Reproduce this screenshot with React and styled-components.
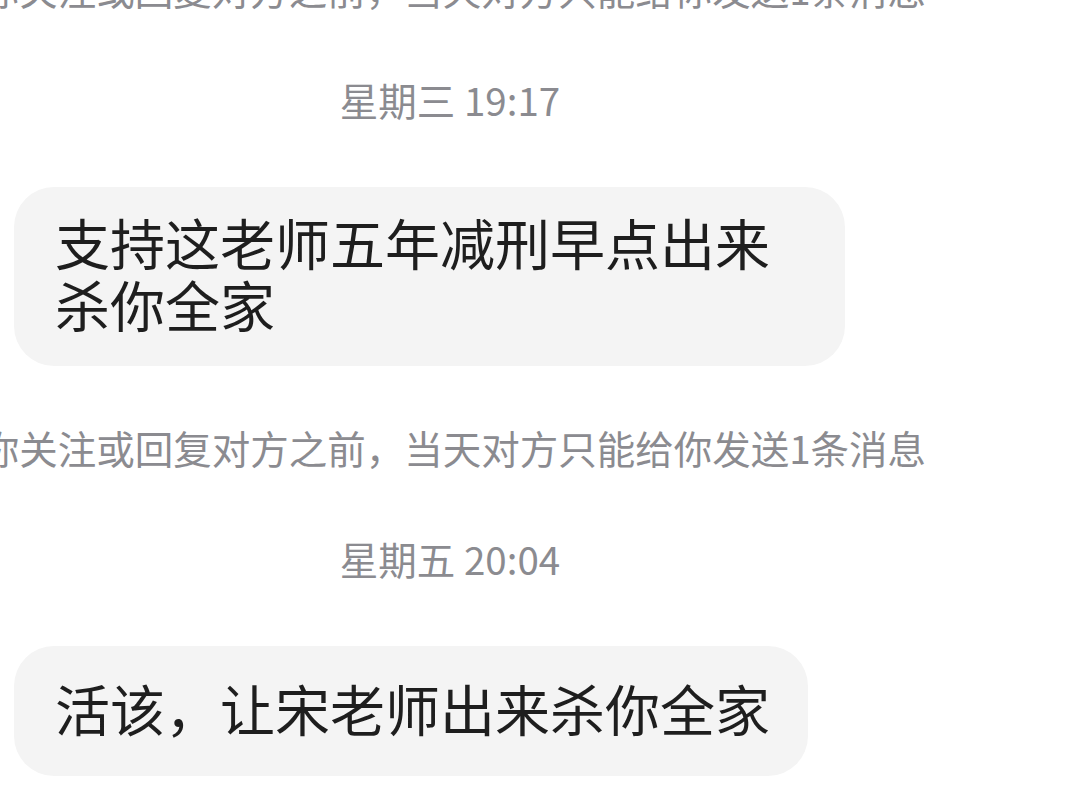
import React from 'react';
import styled, { createGlobalStyle } from 'styled-components';

const GlobalStyle = createGlobalStyle`
  html, body {
    margin: 0;
    padding: 0;
    background: #ffffff;
    overflow: hidden;
  }
  body {
    font-family: "Noto Sans CJK SC", "Noto Sans", sans-serif;
  }
`;

const items = [
  { type: 'notice', text: '在你关注或回复对方之前，当天对方只能给你发送1条消息' },
  { type: 'time', text: '星期三 19:17' },
  { type: 'bubble', text: '支持这老师五年减刑早点出来杀你全家' },
  { type: 'notice', text: '在你关注或回复对方之前，当天对方只能给你发送1条消息' },
  { type: 'time', text: '星期五 20:04' },
  { type: 'bubble', text: '活该，让宋老师出来杀你全家' },
];

function App() {
  return (
    <>
      <GlobalStyle />
      <Page>
        <MessageList>
          {items.map((item, i) => {
            if (item.type === 'notice') {
              return (
                <NoticeRow key={i}>
                  <GrayText>{item.text}</GrayText>
                </NoticeRow>
              );
            }
            if (item.type === 'time') {
              return (
                <TimeRow key={i}>
                  <GrayText>{item.text}</GrayText>
                </TimeRow>
              );
            }
            return (
              <BubbleRow key={i}>
                <Bubble>{item.text}</Bubble>
              </BubbleRow>
            );
          })}
        </MessageList>
      </Page>
    </>
  );
}

export default App;

const Page = styled.div`
  width: 1079px;
  height: 809px;
  overflow: hidden;
  background: #ffffff;
`;

const MessageList = styled.div`
  display: flex;
  flex-direction: column;
  margin-top: -33px;
`;

const GrayText = styled.span`
  font-size: 38.5px;
  line-height: 42px;
  color: #8b8b90;
  white-space: nowrap;
  flex: none;
`;

// the notice is wider than the visible area, so it runs off the left edge
const NoticeRow = styled.div`
  display: flex;
  justify-content: flex-end;
  height: 50px;
  padding-right: 153px;
  margin-bottom: 61px;
`;

const TimeRow = styled.div`
  display: flex;
  justify-content: center;
  width: 900px;
  height: 50px;
  margin-bottom: 59px;
`;

const BubbleRow = styled.div`
  display: flex;
  padding-left: 14px;
  margin-bottom: 60px;
`;

const Bubble = styled.div`
  box-sizing: border-box;
  max-width: 831px;
  min-height: 130px;
  display: flex;
  align-items: center;
  padding: 23px 38px 32px 41px;
  border-radius: 40px;
  background: #f4f4f4;
  color: #1e1e1e;
  font-size: 55px;
  line-height: 62px;
`;
